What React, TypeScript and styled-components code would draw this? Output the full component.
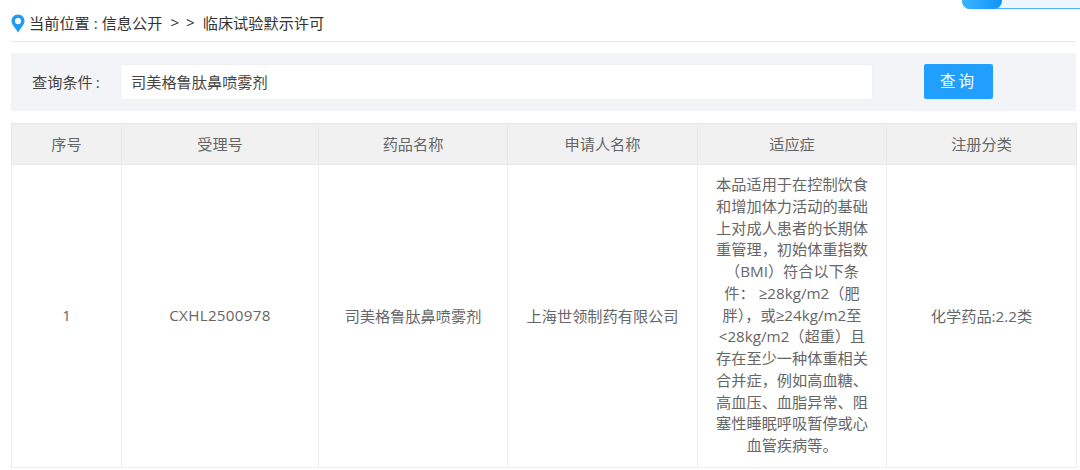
import React from "react";
import styled, { createGlobalStyle } from "styled-components";

const Global = createGlobalStyle`
  html, body { margin: 0; padding: 0; background: #fff; }
  body { width: 1080px; height: 470px; overflow: hidden; font-family: "Open Sans", "Noto Sans CJK SC", sans-serif; }
`;

const Page = styled.div`
  position: relative;
  width: 1080px;
  height: 470px;
  padding: 0 4px 0 11px;
  box-sizing: border-box;
`;

const Corner = styled.div`
  position: absolute;
  top: 0;
  right: 0;
  width: 118px;
  height: 9px;
  display: flex;
  background: #edf6ff;
  border-bottom: 1px solid #4fb0ff;
  border-bottom-left-radius: 8px;
  box-sizing: border-box;
`;

const CornerTab = styled.div`
  width: 40px;
  height: 9px;
  background: linear-gradient(90deg, #3db4ff, #0f94fb);
  border-radius: 0 0 8px 8px;
`;

const Breadcrumb = styled.div`
  height: 42px;
  display: flex;
  align-items: center;
  padding-top: 3px;
  box-sizing: border-box;
  border-bottom: 1px solid #e9e9ec;
  font-size: 15.2px;
  color: #333;
`;

const Pin = styled.svg`
  width: 14px;
  height: 19px;
  margin: 3px 4px 0 0;
  flex: none;
`;

const Sep = styled.span`
  margin: 0 8px;
  word-spacing: 3px;
`;

const SearchBar = styled.div`
  margin-top: 11px;
  height: 58px;
  background: #f3f4f8;
  display: flex;
  align-items: center;
  padding-left: 21px;
  box-sizing: border-box;
`;

const Label = styled.div`
  width: 88px;
  margin-top: -2px;
  font-size: 15.2px;
  color: #444;
  word-spacing: 0;
`;

const Colon = styled.span`
  margin-left: 3px;
`;

const Input = styled.div`
  width: 753px;
  height: 36px;
  background: #fff;
  border-radius: 3px;
  border: 1px solid #f0f0f3;
  box-sizing: border-box;
  display: flex;
  align-items: center;
  padding: 0 0 2px 10px;
  font-size: 15.2px;
  color: #444;
`;

const Button = styled.div`
  margin-left: 51px;
  margin-top: -2px;
  width: 69px;
  height: 35px;
  padding-bottom: 2px;
  box-sizing: border-box;
  background: #209fff;
  border-radius: 2px;
  color: #fff;
  font-size: 15.5px;
  letter-spacing: 3px;
  display: flex;
  align-items: center;
  justify-content: center;
`;

const Table = styled.table`
  margin-top: 12px;
  width: 1066px;
  border-collapse: collapse;
  table-layout: fixed;
  font-size: 15.2px;
  color: #666;
`;

const Col = styled.col<{ $w: number }>`
  width: ${(p) => p.$w}px;
`;

const Th = styled.th`
  height: 41px;
  padding: 0 0 2px;
  box-sizing: border-box;
  font-weight: 400;
  background: #f1f1f1;
  border: 1px solid #e8e8e8;
  text-align: center;
`;

const Td = styled.td`
  height: 303px;
  padding: 0 8px 3px;
  box-sizing: border-box;
  text-align: center;
  border: 1px solid #ececec;
`;

const Code = styled.span`
  letter-spacing: 0.3px;
`;

const Indication = styled(Td)`
  padding: 0 17px 1px;
  line-height: 21.75px;
`;

const columns = [
  { title: "序号", width: 110 },
  { title: "受理号", width: 197 },
  { title: "药品名称", width: 189 },
  { title: "申请人名称", width: 190 },
  { title: "适应症", width: 189 },
  { title: "注册分类", width: 190 },
];

export default function App() {
  return (
    <Page>
      <Global />
      <Corner>
        <CornerTab />
      </Corner>
      <Breadcrumb>
        <Pin viewBox="0 0 14 19">
          <path
            fillRule="evenodd"
            fill="#1e9bf6"
            d="M7 0.5C3.3 0.5 0.5 3.4 0.5 7c0 2.3 1.2 4 2.7 5.900C4.5 14.6 6 16.6 7 18.5c1-1.9 2.5-3.9 3.8-5.6C12.3 11 13.500 9.300 13.500 7 13.500 3.400 10.700 0.500 7 0.500ZM7 4a3 3 0 1 1 0 6.200A3 3 0 0 1 7 4Z"
          />
        </Pin>
        当前位置 : 信息公开<Sep>&gt; &gt;</Sep>临床试验默示许可
      </Breadcrumb>
      <SearchBar>
        <Label>
          查询条件<Colon>:</Colon>
        </Label>
        <Input>司美格鲁肽鼻喷雾剂</Input>
        <Button>查询</Button>
      </SearchBar>
      <Table>
        <colgroup>
          {columns.map((c) => (
            <Col key={c.title} $w={c.width} />
          ))}
        </colgroup>
        <thead>
          <tr>
            {columns.map((c) => (
              <Th key={c.title}>{c.title}</Th>
            ))}
          </tr>
        </thead>
        <tbody>
          <tr>
            <Td>1</Td>
            <Td>
              <Code>CXHL2500978</Code>
            </Td>
            <Td>司美格鲁肽鼻喷雾剂</Td>
            <Td>上海世领制药有限公司</Td>
            <Indication>
              本品适用于在控制饮食和增加体力活动的基础上对成人患者的长期体重管理，初始体重指数（BMI）符合以下条件： ≥28kg/m2（肥胖），或≥24kg/m2至&lt;28kg/m2（超重）且存在至少一种体重相关合并症，例如高血糖、高血压、血脂异常、阻塞性睡眠呼吸暂停或心血管疾病等。
            </Indication>
            <Td>化学药品:2.2类</Td>
          </tr>
        </tbody>
      </Table>
    </Page>
  );
}
